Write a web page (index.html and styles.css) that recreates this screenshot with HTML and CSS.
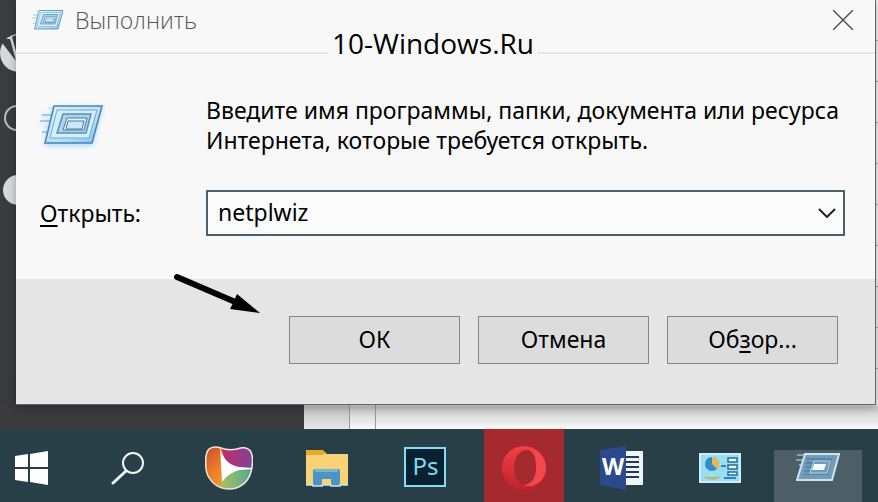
FILE: index.html
```html
<!DOCTYPE html>
<html lang="ru">
<head>
  <meta charset="UTF-8">
  <meta name="viewport" content="width=device-width, initial-scale=1.0">
  <title>Выполнить</title>
  <link rel="stylesheet" href="styles.css">
</head>
<body>

  <!-- Run icon, used in the title bar and dialog -->
  <svg class="sprite" aria-hidden="true">
    <defs>
      <linearGradient id="runFill" x1="0" y1="0" x2="1" y2="1">
        <stop offset="0" stop-color="#dff1fb"/>
        <stop offset="0.6" stop-color="#b4e0f7"/>
        <stop offset="1" stop-color="#7cc4ee"/>
      </linearGradient>
    </defs>
    <symbol id="run" viewBox="0 0 64 44">
      <path d="M2 12h14M0 18h13M2 29h8" stroke="#8fb9d6" stroke-width="1.5"/>
      <path d="M8 5h6M4 24h8" stroke="#b9d9ec" stroke-width="1"/>
      <path d="M14 3h48L52 40H5z" fill="url(#runFill)" stroke="#4d83b0" stroke-width="1.5"/>
      <path d="M17 7h40L49 35H10z" fill="#d3effb" stroke="#74a9cd" stroke-width="1"/>
      <path d="M23 11h28l-5 19H17z" fill="#a9d3ee" stroke="#5c8fba" stroke-width="1.5"/>
      <path d="M27 15h20l-3 12H23z" fill="#e4f4fb" stroke="#4a7aa6" stroke-width="1"/>
      <path d="M28 18h16l-2 8H26z" fill="#cde7f6" stroke="#4a7aa6" stroke-width="1"/>
    </symbol>
  </svg>

  <main class="desktop">
    <div class="backdrop" aria-hidden="true">
      <div class="side">
        <svg class="side-icons" viewBox="0 0 32 240">
          <circle cx="19" cy="53" r="19" fill="#d6d9da"/>
          <path d="M0 39h10l6 22L3 44zM12 37l4 14V35z" fill="#3a3e40"/>
          <circle cx="17" cy="118" r="12" fill="none" stroke="#b9bcbd" stroke-width="2"/>
          <circle cx="18" cy="190" r="15" fill="#d6d9da"/>
        </svg>
      </div>
      <div class="page">
        <span class="pane"></span>
        <span class="gutter"></span>
        <span class="rest"></span>
      </div>
    </div>

    <form class="dialog" onsubmit="return false">
      <header class="titlebar">
        <svg class="title-icon"><use href="#run"/></svg>
        <h1>Выполнить</h1>
        <span class="watermark">10-Windows.Ru</span>
        <button class="close" type="button" aria-label="Закрыть">
          <svg viewBox="0 0 20 20"><path d="M0 0l20 20M20 0L0 20" stroke="#444" stroke-width="1.3"/></svg>
        </button>
      </header>

      <div class="content">
        <svg class="big-icon"><use href="#run"/></svg>
        <p>Введите имя программы, папки, документа или ресурса Интернета, которые требуется открыть.</p>
        <label for="command"><u>О</u>ткрыть:</label>
        <div class="combo">
          <input type="text" id="command" value="netplwiz" spellcheck="false">
          <button type="button" aria-label="Список">
            <svg viewBox="0 0 18 10"><path d="M1 1l8 8 8-8" fill="none" stroke="#222" stroke-width="2"/></svg>
          </button>
        </div>
      </div>

      <footer class="buttons">
        <svg class="arrow" viewBox="0 0 90 44">
          <path d="M7 5L63 29" stroke="#000" stroke-width="6" stroke-linecap="round"/>
          <path d="M67 22L90 41L60 37L63 31z" fill="#000"/>
        </svg>
        <button type="submit">ОК</button>
        <button type="button">Отмена</button>
        <button type="button">Об<u>з</u>ор...</button>
      </footer>
    </form>
  </main>

  <nav class="taskbar">
    <button type="button" aria-label="Пуск">
      <svg width="34" height="34" viewBox="0 0 34 34">
        <path d="M0 5l13-2v13H0zM15 3l18-3v16H15zM0 18h13v13L0 29zM15 18h18v16l-18-3z" fill="#fff"/>
      </svg>
    </button>
    <button type="button" class="search" aria-label="Поиск">
      <svg width="34" height="34" viewBox="0 0 34 34">
        <g fill="none" stroke="#eef7f8" stroke-linecap="round">
          <circle cx="22" cy="12" r="10" stroke-width="2"/>
          <path d="M15 20L2 32" stroke-width="3"/>
        </g>
      </svg>
    </button>
    <button type="button" aria-label="Видеоплеер">
      <svg width="48" height="44" viewBox="0 0 48 44">
        <defs>
          <linearGradient id="orange" x1="0" y1="0" x2="1" y2="1">
            <stop offset="0" stop-color="#c84a2c"/>
            <stop offset="0.4" stop-color="#ee8127"/>
            <stop offset="1" stop-color="#f0c22f"/>
          </linearGradient>
          <linearGradient id="purple" x1="0" y1="0" x2="1" y2="0">
            <stop offset="0" stop-color="#c42a6b"/>
            <stop offset="1" stop-color="#80439a"/>
          </linearGradient>
          <linearGradient id="green" x1="0" y1="0" x2="1" y2="0">
            <stop offset="0" stop-color="#a9c65c"/>
            <stop offset="1" stop-color="#4fa596"/>
          </linearGradient>
          <clipPath id="playerShape">
            <path d="M16 2C10 0 4 1 2 6C0 12 0 24 3 30C8 39 16 43 24 43C34 43 43 37 46 26C48 18 48 11 46 6C43 1 38 1 32 3C27 4 21 4 16 2z"/>
          </clipPath>
        </defs>
        <g clip-path="url(#playerShape)">
          <path d="M0 0h48v44H0z" fill="url(#orange)"/>
          <path d="M16 0h32v22H22z" fill="url(#purple)"/>
          <path d="M14 44l8-22h26v22z" fill="url(#green)"/>
          <path d="M15 0q3 18 19 21l14 1v1l-14 1Q22 28 17 36z" fill="#fff"/>
        </g>
        <path d="M16 2C10 0 4 1 2 6C0 12 0 24 3 30C8 39 16 43 24 43C34 43 43 37 46 26C48 18 48 11 46 6C43 1 38 1 32 3C27 4 21 4 16 2z" fill="none" stroke="#f2e6dd" stroke-width="1.5"/>
      </svg>
    </button>
    <button type="button" aria-label="Проводник">
      <svg width="44" height="38" viewBox="0 0 44 38">
        <path d="M1 2h17l4 3h21v31H1z" fill="#f8d376"/>
        <path d="M1 1h17l3 3-3 2H1z" fill="#e8a92e"/>
        <path d="M8 22q0-2 2-2h23q2 0 2 2v15h-9v-7h-9v7H8z" fill="#4796c4"/>
        <path d="M10 20h23v3H10z" fill="#72b4d3"/>
        <path d="M1 36h7v1h9v-1h9v1h9v-1h8" fill="none" stroke="#c7e5ef" stroke-width="1.5"/>
      </svg>
    </button>
    <button type="button" aria-label="Photoshop"><span class="ps">Ps</span></button>
    <button type="button" aria-label="Opera">
      <span class="tile opera">
        <svg width="46" height="46" viewBox="0 0 46 46">
          <defs>
            <linearGradient id="operaRed" x1="0" y1="0" x2="0" y2="1">
              <stop offset="0" stop-color="#f34045"/>
              <stop offset="1" stop-color="#c51f2a"/>
            </linearGradient>
          </defs>
          <path fill-rule="evenodd" d="M23 1a22 22 0 1 0 0 44a22 22 0 1 0 0-44zM25 5c8 0 11 8 11 18s-4 17-11 17s-12-7-12-17s5-18 12-18z" fill="url(#operaRed)"/>
          <path d="M27 4c9-1 18 7 18 19s-12 22-23 17c9 0 13-8 13-17S34 7 27 4z" fill="#f4484c"/>
        </svg>
      </span>
    </button>
    <button type="button" aria-label="Word">
      <svg width="44" height="44" viewBox="0 0 44 44">
        <path d="M23 5h20v34H23z" fill="#f2f5f8"/>
        <path d="M25 11h14M25 16h14M25 21h14M25 26h14M25 31h14" stroke="#23375c" stroke-width="2"/>
        <path d="M0 4l26-4v44L0 39z" fill="#2b4a8e"/>
        <text x="13" y="29" class="word-letter">W</text>
      </svg>
    </button>
    <button type="button" aria-label="Панель управления">
      <svg width="42" height="30" viewBox="0 0 42 30">
        <path d="M1 1h40v28H1z" fill="#9cdcf4" stroke="#c7effa" stroke-width="2"/>
        <circle cx="13" cy="11" r="7" fill="#2f8dc8"/>
        <path d="M13 11V4a7 7 0 0 1 5 12z" fill="#e7b94b"/>
        <path d="M29 5h9v4h-9zM29 12h9v4h-9zM29 19h9v3h-9z" fill="#e6fbff" stroke="#286c98" stroke-width="1.5"/>
        <path d="M22 13h5M25 25h12" stroke="#2f83b7" stroke-width="2"/>
        <path d="M6 24q5 3 14 0" fill="none" stroke="#b4b765" stroke-width="2"/>
      </svg>
    </button>
    <button type="button" aria-label="Выполнить">
      <span class="tile open">
        <svg width="44" height="30" viewBox="0 0 44 30">
          <path d="M1 3h10M0 8h9M3 13h6" stroke="#9db8c6" stroke-width="1.5"/>
          <path d="M9 2h34l-7 26H1z" fill="#739cba" stroke="#cce4f1" stroke-width="2"/>
          <path d="M11 6h25l-4 17H7z" fill="#5987aa"/>
          <path d="M8 9h10M7 13h9M6 17h9M5 21h12" stroke="#87aac2" stroke-width="1"/>
          <path d="M18 9h16l-3 12H14z" fill="#6d9abd" stroke="#b4d2e5" stroke-width="1"/>
          <path d="M18 12h12l-2 6H16z" fill="#f3fbff"/>
        </svg>
      </span>
    </button>
  </nav>

</body>
</html>
```
FILE: styles.css
```css
* { box-sizing: border-box; margin: 0; padding: 0; }

body {
  font-family: 'Noto Sans', 'Open Sans', sans-serif;
  font-size: 23px;
  color: #000;
  min-height: 100vh;
  display: flex;
  flex-direction: column;
  overflow-x: hidden;
}

button, input {
  font: inherit;
  color: inherit;
}

button {
  border: none;
  background: none;
  cursor: pointer;
}

u {
  text-decoration-thickness: 2px;
  text-underline-offset: 3px;
}

.sprite {
  position: absolute;
  width: 0;
  height: 0;
}

.desktop {
  position: relative;
  flex: 1;
  padding: 0 2px 24px 16px;
}

/* Windows behind the dialog */
.backdrop {
  position: absolute;
  inset: 0;
  display: flex;
}

.side {
  width: 304px;
  background: linear-gradient(#3a3d3f, #363b3d 90%, #3b3a3c);
}

.side-icons {
  display: block;
  width: 32px;
  height: 240px;
}

.page {
  flex: 1;
  display: flex;
  background: linear-gradient(#f3f3f3 94%, #c9c9c9 95%, #fafafa);
}

.pane {
  width: 46px;
  background: rgba(160, 160, 165, 0.2);
  border-right: 1px solid #999;
}

.gutter {
  width: 26px;
  border-right: 1px solid #999;
}

.rest {
  flex: 1;
  background: repeating-linear-gradient(transparent 0 40px, #aaa 40px 41px) right top / 2px 94% no-repeat;
}

/* Dialog */
.dialog {
  position: relative;
  background: #f8f8f8;
  border-right: 1px solid #666;
  border-bottom: 1px solid #666;
  box-shadow: 0 2px 8px rgba(0, 0, 0, 0.3);
}

.titlebar {
  position: relative;
  display: flex;
  align-items: center;
  height: 54px;
  padding: 0 20px 12px 16px;
  border-bottom: 2px solid #e8e6e6;
  font-family: 'Open Sans', 'Noto Sans', sans-serif;
}

.title-icon {
  width: 32px;
  height: 22px;
  margin-right: 11px;
}

.titlebar h1 {
  flex: 1;
  font-size: 23px;
  font-weight: 300;
  color: #555;
}

.watermark {
  position: absolute;
  left: 312px;
  bottom: -9px;
  padding: 0 4px;
  font-size: 28px;
  line-height: 36px;
  background: #f8f8f8;
}

.close {
  width: 22px;
  height: 20px;
}

.close svg {
  display: block;
  width: 20px;
  height: 20px;
}

.content {
  display: grid;
  grid-template-columns: 166px 1fr;
  row-gap: 35px;
  padding: 41px 30px 43px 24px;
}

.big-icon {
  width: 64px;
  height: 44px;
  margin-top: 8px;
  filter: drop-shadow(0 2px 2px #a5dcfb);
}

.content p {
  line-height: 30px;
}

.content label {
  align-self: center;
}

.combo {
  display: flex;
  height: 46px;
  border: 2px solid #4b626d;
  background: #fbfbfb;
}

.combo input {
  flex: 1;
  min-width: 0;
  padding: 0 10px 3px;
  border: none;
  outline: none;
  background: transparent;
}

.combo button {
  display: flex;
  align-items: center;
  justify-content: center;
  width: 32px;
}

.combo svg {
  width: 18px;
  height: 10px;
}

.buttons {
  position: relative;
  display: flex;
  justify-content: flex-end;
  gap: 18px;
  padding: 37px 37px 40px 24px;
  background: #e6e5e6;
}

.buttons button {
  width: 171px;
  height: 48px;
  padding-bottom: 2px;
  border: 1px solid #858585;
  background: #dcdcdc;
}

.buttons button:hover {
  background: #e5f1fb;
  border-color: #0078d7;
}

/* Pointer drawn over the dialog */
.arrow {
  position: absolute;
  top: -7px;
  right: 615px;
  width: 90px;
  height: 44px;
}

/* Taskbar */
.taskbar {
  display: grid;
  grid-template-columns: 64fr 116fr repeat(7, 98fr);
  height: 73px;
  padding-right: 11px;
  background: #293f47;
}

.taskbar button {
  display: flex;
  align-items: center;
  justify-content: center;
}

.taskbar svg {
  margin-top: 4px;
}

.taskbar .search {
  padding-left: 12px;
}

.tile {
  display: flex;
  align-items: center;
  justify-content: center;
  flex: none;
}

.opera {
  width: 80px;
  height: 100%;
  background: #a42a30;
}

.open {
  width: 88px;
  height: 52px;
  align-self: flex-end;
  align-items: flex-start;
  background: #4c5e66;
}

.open svg {
  margin-top: 2px;
}

.ps {
  width: 42px;
  height: 40px;
  margin-top: 2px;
  border: 2px solid #83dcf5;
  background: #08202f;
  color: #82d8f0;
  font-size: 24px;
  line-height: 34px;
  text-align: center;
}

.word-letter {
  font-family: 'Open Sans', sans-serif;
  font-size: 23px;
  font-weight: 700;
  fill: #fff;
  text-anchor: middle;
}
```
